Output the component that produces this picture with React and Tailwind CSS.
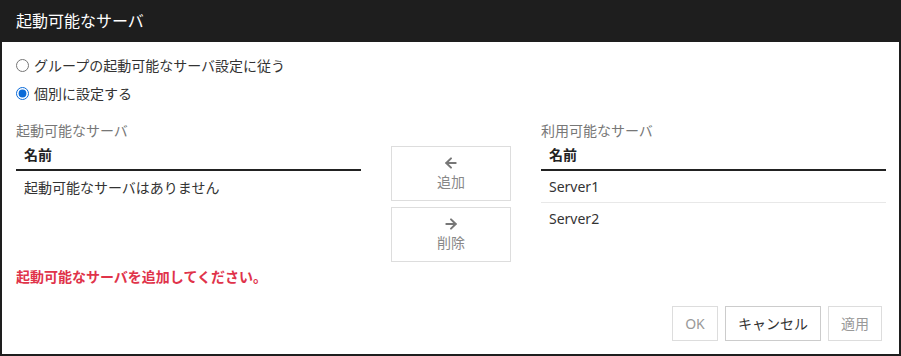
import { ArrowLeft, ArrowRight } from "lucide-react";

const font = {
  fontFamily: '"Noto Sans", "Noto Sans CJK JP", sans-serif',
};

function ServerTable({ label, rows, empty }) {
  return (
    <div className="w-[345px] flex flex-col">
      <div className="h-[20px] flex items-center text-[14px] text-[#777]">{label}</div>
      <div className="h-[31px] flex items-center px-2 text-[14px] font-bold text-[#222] border-b-2 border-[#222]">
        名前
      </div>
      {rows.length === 0 && (
        <div className="h-[32px] flex items-center px-2 text-[14px] text-[#333]">{empty}</div>
      )}
      {rows.map((r, i) => (
        <div
          key={r}
          className={
            i < rows.length - 1
              ? "h-[32px] flex items-center px-2 text-[14px] text-[#333] border-b border-[#e8e8e8]"
              : "h-[31px] flex items-center px-2 text-[14px] text-[#333]"
          }
        >
          {r}
        </div>
      ))}
    </div>
  );
}

function MoveButton({ icon, text }) {
  return (
    <button className="w-[120px] h-[55px] border border-[#ddd] bg-white flex flex-col items-center justify-center gap-[1px] text-[#888] text-[14px]">
      <span className="text-[#777]">{icon}</span>
      <span className="leading-[20px]">{text}</span>
    </button>
  );
}

export default function App() {
  return (
    <div style={font} className="w-[901px] h-[356px] bg-white flex flex-col border-x-2 border-b-2 border-[#1e1e1e]">
      {/* title bar */}
      <div className="h-[42px] -mx-[2px] bg-[#1e1e1e] flex items-center px-4 text-white text-[16px]">
        起動可能なサーバ
      </div>

      <div className="flex-1 flex flex-col pl-[14px] pr-[13px] pt-[9px]">
        <label className="h-[28px] flex items-center gap-[5px] text-[14px] text-[#333]">
          <input type="radio" name="mode" className="w-[13px] h-[13px] m-0 accent-[#0b6bd8]" />
          グループの起動可能なサーバ設定に従う
        </label>
        <label className="h-[28px] flex items-center gap-[5px] text-[14px] text-[#333]">
          <input type="radio" name="mode" defaultChecked className="w-[13px] h-[13px] m-0 accent-[#0b6bd8]" />
          個別に設定する
        </label>

        <div className="flex gap-[30px] mt-[13px] h-[142px]">
          <ServerTable label="起動可能なサーバ" rows={[]} empty="起動可能なサーバはありません" />
          <div className="flex flex-col gap-[6px] pt-[26px]">
            <MoveButton icon={<ArrowLeft size={16} strokeWidth={3} />} text="追加" />
            <MoveButton icon={<ArrowRight size={16} strokeWidth={3} />} text="削除" />
          </div>
          <ServerTable label="利用可能なサーバ" rows={["Server1", "Server2"]} />
        </div>

        <div className="h-[20px] flex items-center mt-[4px] text-[14px] font-bold text-[#e0334a]">
          起動可能なサーバを追加してください。
        </div>

        <div className="flex justify-end gap-[7px] mt-[20px] pr-[4px]">
          <button className="w-[46px] h-[35px] border border-[#ddd] text-[14px] text-[#999]">OK</button>
          <button className="w-[96px] h-[35px] border border-[#ccc] text-[14px] text-[#333]">キャンセル</button>
          <button className="w-[54px] h-[35px] border border-[#ddd] text-[14px] text-[#999]">適用</button>
        </div>
      </div>
    </div>
  );
}
